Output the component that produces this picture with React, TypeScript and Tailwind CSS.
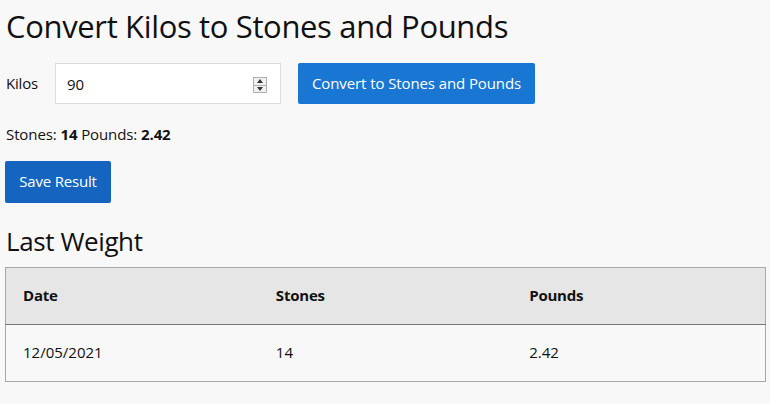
import React, { useState } from "react";

export default function App() {
  const [kilos, setKilos] = useState("90");

  return (
    <div className="min-h-screen bg-[#f8f8f8] text-[#111] px-[5px] pt-[4px]" style={{ fontFamily: '"Open Sans", "Noto Sans", sans-serif' }}>
      {/* Title */}
      <h1 className="text-[31px] leading-[44px] ml-[1px] tracking-[-0.35px]">Convert Kilos to Stones and Pounds</h1>

      {/* Input row */}
      <div className="flex items-center mt-[15px]">
        <label className="text-[15px] w-[49px] ml-[1px] tracking-[-0.2px]">Kilos</label>
        <div className="relative w-[226px] h-[41px] bg-white border border-[#dcdcdc]">
          <input
            value={kilos}
            onChange={(e) => setKilos(e.target.value)}
            className="w-full h-full bg-transparent pl-[11px] pr-[30px] text-[15px] outline-none"
          />
          <div className="absolute right-[13px] top-[13px] w-[14px] h-[16px] flex flex-col border border-[#b0b0b0] bg-[#f0f0f0]">
            <div className="flex-1 flex items-center justify-center border-b border-[#b0b0b0]">
              <svg width="6" height="4" viewBox="0 0 6 4"><path d="M3 0L6 4H0z" fill="#333" /></svg>
            </div>
            <div className="flex-1 flex items-center justify-center">
              <svg width="6" height="4" viewBox="0 0 6 4"><path d="M0 0H6L3 4z" fill="#333" /></svg>
            </div>
          </div>
        </div>
        <button className="ml-[17px] h-[41px] px-[14px] bg-[#1976d2] text-white text-[15px] rounded-[2px] tracking-[-0.1px]">
          Convert to Stones and Pounds
        </button>
      </div>

      {/* Result */}
      <p className="mt-[19px] text-[15px] ml-[1px] tracking-[-0.1px]">
        Stones: <b>14</b> Pounds: <b>2.42</b>
      </p>

      <button className="mt-[15px] h-[42px] w-[106px] bg-[#1565c0] text-white text-[15px] rounded-[2px] tracking-[-0.2px]">
        Save Result
      </button>

      <h2 className="mt-[21px] text-[26px] leading-[34px] ml-[1px] tracking-[-0.4px]">Last Weight</h2>

      <table className="mt-[9px] w-[761px] border border-[#a8a8a8] border-collapse text-[15px] table-fixed">
        <thead>
          <tr className="bg-[#e6e6e6] h-[57px] border-b border-[#777]">
            <th className="text-left font-bold pl-[17px] tracking-[-0.2px]">Date</th>
            <th className="text-left font-bold pl-[17px] tracking-[-0.2px]">Stones</th>
            <th className="text-left font-bold pl-[17px] tracking-[-0.2px]">Pounds</th>
          </tr>
        </thead>
        <tbody>
          <tr className="h-[57px]">
            <td className="pl-[17px]">12/05/2021</td>
            <td className="pl-[17px]">14</td>
            <td className="pl-[17px]">2.42</td>
          </tr>
        </tbody>
      </table>
    </div>
  );
}
